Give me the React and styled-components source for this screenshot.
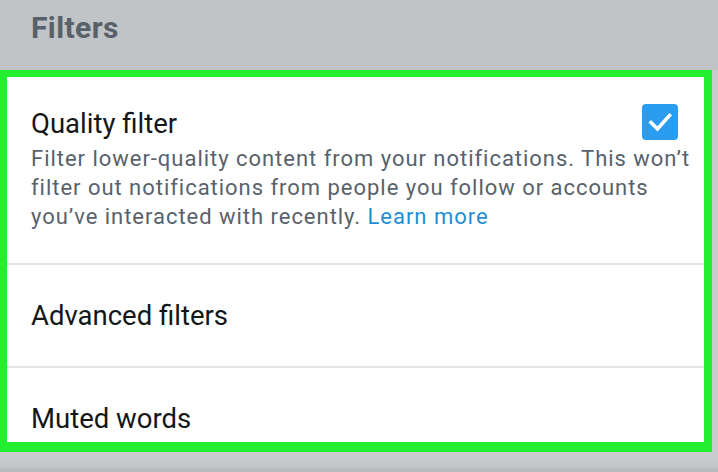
import React from 'react';
import styled, { createGlobalStyle } from 'styled-components';

const GlobalStyle = createGlobalStyle`
    html, body {
        margin: 0;
        padding: 0;
        background: #c6c8cb;
        font-family: Roboto, "Noto Sans", sans-serif;
    }
`;

const Page = styled.div`
    width: 718px;
    height: 472px;
    overflow: hidden;
    background: #c8cacc;
    display: flex;
    flex-direction: column;
`;

const Header = styled.div`
    height: 70px;
    flex-shrink: 0;
    display: flex;
    align-items: center;
    padding-left: 31px;
    padding-bottom: 16px;
    box-sizing: border-box;
    background: #c1c4c7;
    color: #58616a;
    font-size: 30px;
    letter-spacing: 0.4px;
    font-weight: 700;
`;

const Highlight = styled.div`
    width: 712px;
    height: 382px;
    box-sizing: border-box;
    border: 7px solid #22ef2f;
    border-right-width: 8px;
    border-bottom-width: 10px;
    background: #ffffff;
    overflow: hidden;
    display: flex;
    flex-direction: column;
`;

const Row = styled.div`
    flex-shrink: 0;
    box-sizing: border-box;
    border-top: ${p => (p.$first ? 'none' : '2px solid #e3e5e7')};
    padding: ${p => (p.$first ? '31px 26px 33px 24px' : '0 26px 0 24px')};
    height: ${p => (p.$first ? '186px' : '103px')};
    display: flex;
    flex-direction: column;
    justify-content: ${p => (p.$first ? 'flex-start' : 'center')};
`;

const TitleLine = styled.div`
    display: flex;
    align-items: center;
    justify-content: space-between;
`;

const Title = styled.div`
    font-size: 27.5px;
    line-height: 30px;
    color: #14171a;
`;

const Description = styled.div`
    margin-top: 4px;
    font-size: 22px;
    letter-spacing: 0.97px;
    line-height: 29px;
    color: #58626c;
    width: 672px;
`;

const Link = styled.span`
    color: #1e8fd6;
`;

const Checkbox = styled.div`
    width: 36px;
    height: 36px;
    margin-top: -4px;
    border-radius: 4px;
    background: #2a9df0;
    display: flex;
    align-items: center;
    justify-content: center;
`;

const Footer = styled.div`
    flex: 1;
    background: linear-gradient(#cbcccd, #c4c5c7);
    border-bottom: 4px solid #b9babc;
`;

const Check = () => (
    <svg width="28" height="28" viewBox="0 0 28 28">
        <path d="M5 14.5 L11.5 21 L23.5 7.5" fill="none" stroke="#fff" strokeWidth="3.6" strokeLinecap="square" />
    </svg>
);

const App = () => (
    <Page>
        <GlobalStyle />
        <Header>Filters</Header>
        <Highlight>
            <Row $first>
                <TitleLine>
                    <Title>Quality filter</Title>
                    <Checkbox>
                        <Check />
                    </Checkbox>
                </TitleLine>
                <Description>
                    Filter lower-quality content from your notifications. This won’t
                    filter out notifications from people you follow or accounts
                    you’ve interacted with recently. <Link>Learn more</Link>
                </Description>
            </Row>
            <Row>
                <Title>Advanced filters</Title>
            </Row>
            <Row>
                <Title>Muted words</Title>
            </Row>
        </Highlight>
        <Footer />
    </Page>
);

export default App;
